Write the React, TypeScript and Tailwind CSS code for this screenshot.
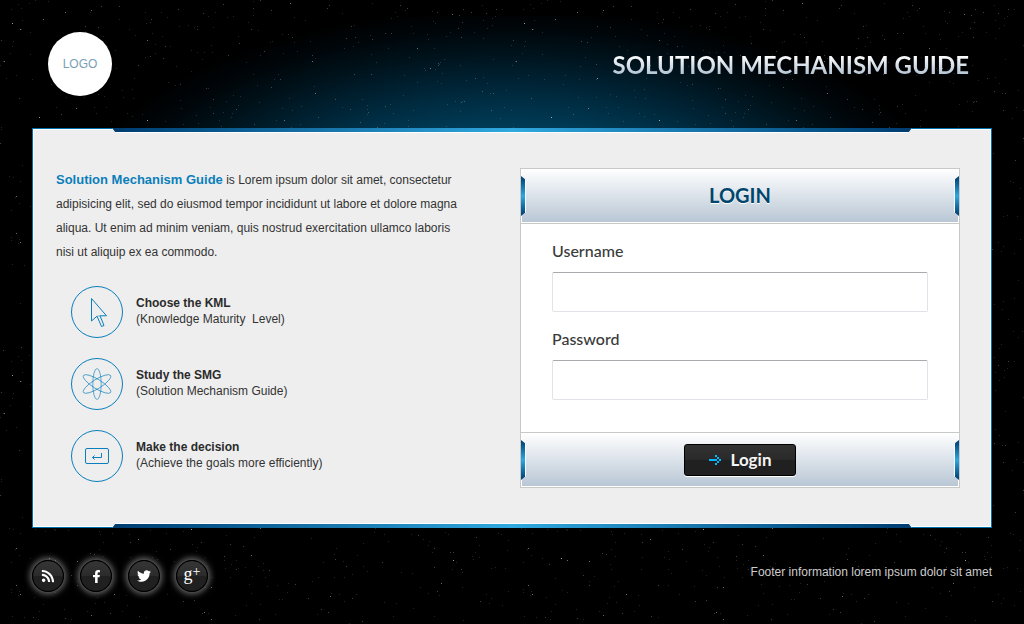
import { useId, type ReactNode } from "react";
import { FaFacebookF, FaRss, FaTwitter } from "react-icons/fa";

const TILE_W = 512;
const TILE_H = 352;

function makeStars(count: number, seed: number): string {
  let s = seed;
  const next = () => {
    s = (s * 1664525 + 1013904223) % 4294967296;
    return s / 4294967296;
  };
  let d = "";
  for (let i = 0; i < count; i++) {
    const x = Math.floor(next() * TILE_W);
    const y = Math.floor(next() * TILE_H);
    d += `M${x} ${y}h1v1h-1z`;
  }
  return d;
}

const starLayers = [
  { d: makeStars(560, 11), opacity: 0.14 },
  { d: makeStars(180, 47), opacity: 0.24 },
  { d: makeStars(42, 91), opacity: 0.42 },
  { d: makeStars(10, 133), opacity: 0.6 },
];

function StarField() {
  return (
    <svg aria-hidden="true" className="absolute inset-0 h-full w-full" shapeRendering="crispEdges">
      <defs>
        <pattern id="stars" width={TILE_W} height={TILE_H} patternUnits="userSpaceOnUse">
          {starLayers.map((layer) => (
            <path key={layer.opacity} d={layer.d} fill="#ffffff" fillOpacity={layer.opacity} />
          ))}
        </pattern>
      </defs>
      <rect width="100%" height="100%" fill="url(#stars)" />
    </svg>
  );
}

function CursorIcon() {
  return (
    <svg viewBox="0 0 52 52" className="size-[52px]" fill="none" stroke="#0a7fbb" aria-hidden="true">
      <circle cx="26" cy="26" r="25.5" />
      <path d="M20.5 12.5v22.5l5.5-4.8 4.5 10.3 2.5-1-4-9.7h6.5z" />
      <path d="M26 30.2l3-.4" strokeOpacity="0.5" />
    </svg>
  );
}

function AtomIcon() {
  return (
    <svg viewBox="0 0 52 52" className="size-[52px]" fill="none" stroke="#0a7fbb" aria-hidden="true">
      <circle cx="26" cy="26" r="25.5" />
      <g strokeWidth="0.8" strokeOpacity="0.8">
        <ellipse cx="26" cy="26" rx="4.2" ry="15.5" />
        <ellipse cx="26" cy="26" rx="4.6" ry="16" transform="rotate(58 26 26)" />
        <ellipse cx="26" cy="26" rx="4.6" ry="16" transform="rotate(-58 26 26)" />
      </g>
    </svg>
  );
}

function EnterIcon() {
  return (
    <svg viewBox="0 0 52 52" className="size-[52px]" fill="none" stroke="#0a7fbb" aria-hidden="true">
      <circle cx="26" cy="26" r="25.5" />
      <rect x="14.5" y="18.5" width="23" height="15" rx="1.5" />
      <path d="M30.5 23v4.5h-9M23.5 25.5l-2 2 2 2" />
    </svg>
  );
}

function ArrowIcon() {
  return (
    <svg viewBox="0 0 6 5" className="h-[10px] w-3" fill="#00b9ff" shapeRendering="crispEdges" aria-hidden="true">
      <path d="M0 2h4v1h-4zM3 0h1v1h-1zM4 1h1v1h-1zM5 2h1v1h-1zM4 3h1v1h-1zM3 4h1v1h-1z" />
    </svg>
  );
}

const features = [
  { icon: <CursorIcon />, title: "Choose the KML", note: "(Knowledge Maturity\u00a0 Level)" },
  { icon: <AtomIcon />, title: "Study the SMG", note: "(Solution Mechanism Guide)" },
  { icon: <EnterIcon />, title: "Make the decision", note: "(Achieve the goals more efficiently)" },
];

const socials = [
  { name: "RSS", icon: <FaRss className="size-[14px]" /> },
  { name: "Facebook", icon: <FaFacebookF className="size-[13px]" /> },
  { name: "Twitter", icon: <FaTwitter className="size-[14px]" /> },
  {
    name: "Google Plus",
    icon: (
      <span className="flex pb-1 font-['Liberation_Serif',serif] text-lg leading-4">
        g<span className="text-sm leading-3">+</span>
      </span>
    ),
  },
];

function PanelEdge({ side }: { side: "top" | "bottom" }) {
  const place =
    side === "top"
      ? "-top-px [clip-path:polygon(0_0,100%_0,calc(100%-4px)_100%,4px_100%)]"
      : "-bottom-px [clip-path:polygon(4px_0,calc(100%-4px)_0,100%_100%,0_100%)]";
  const fill = side === "top" ? "mb-px" : "mt-px";
  return (
    <div className={`absolute inset-x-[79px] flex h-[5px] bg-white ${place}`}>
      <div className={`flex-1 bg-linear-to-r from-[#003c70] via-[#2fa9e0] to-[#003c70] ${fill}`} />
    </div>
  );
}

function SideMarks() {
  const bar = "absolute top-[7px] h-10 w-[5px] bg-white";
  const fill = "h-full w-1 bg-linear-to-b from-[#003c70] via-[#2fa9e0] to-[#003c70]";
  return (
    <>
      <div className={`${bar} left-0 [clip-path:polygon(0_0,100%_4px,100%_calc(100%-4px),0_100%)]`}>
        <div className={fill} />
      </div>
      <div className={`${bar} right-0 [clip-path:polygon(100%_0,0_4px,0_calc(100%-4px),100%_100%)]`}>
        <div className={`${fill} ml-px`} />
      </div>
    </>
  );
}

function Field({ label, type }: { label: ReactNode; type: string }) {
  const id = useId();
  return (
    <div className="flex flex-col gap-[10px]">
      <label htmlFor={id} className="font-['Lato',sans-serif] text-base leading-[22px] font-medium text-[#3a3a3a]">
        {label}
      </label>
      <input
        id={id}
        type={type}
        className="h-10 w-full rounded-xs border border-[#e2e2e8] border-t-[#a9a9ae] bg-white px-3 text-sm text-[#333] outline-none"
      />
    </div>
  );
}

export default function App() {
  return (
    <div className="relative min-h-screen bg-black font-['Liberation_Sans',Arial,sans-serif] text-xs">
      <div className="absolute inset-x-0 top-4 h-28 bg-[radial-gradient(ellipse_450px_220px_at_50%_212px,#003b56_46%,#003148_55%,#002233_67%,#001119_81%,#00060a_91%,#000000_100%)]" />
      <StarField />
      <div className="relative flex min-h-screen flex-col px-8">
        <header className="flex h-32 items-center justify-between pr-[23px] pl-4">
          <a
            href="#"
            className="flex size-16 items-center justify-center rounded-full bg-white text-xs text-[#7a9fb5]"
          >
            LOGO
          </a>
          <h1 className="bg-linear-to-b from-white from-25% to-[#b4c5d5] to-80% bg-clip-text pt-[2px] font-['Lato',sans-serif] text-2xl leading-8 font-bold text-transparent">
            SOLUTION MECHANISM GUIDE
          </h1>
        </header>

        <main className="relative flex gap-10 border border-[#006ea8] bg-[#eeeeee] py-[39px] pr-[31px] pl-[23px] shadow-[inset_0_0_0_1px_#fff]">
          <PanelEdge side="top" />
          <PanelEdge side="bottom" />
          <section className="flex-1">
            <p className="max-w-[412px] text-xs leading-6 text-[#333]">
              <strong className="text-[13px] leading-none text-[#0a7fbb]">Solution Mechanism Guide</strong> is Lorem
              ipsum dolor sit amet, consectetur adipisicing elit, sed do eiusmod tempor incididunt ut labore et dolore
              magna aliqua. Ut enim ad minim veniam, quis nostrud exercitation ullamco laboris nisi ut aliquip ex ea
              commodo.
            </p>
            <ul className="mt-[22px] flex flex-col gap-5 pl-[15px]">
              {features.map((f) => (
                <li key={f.title} className="flex items-center gap-[13px]">
                  {f.icon}
                  <div className="pb-[2px] leading-4 text-[#333]">
                    <h2 className="font-bold text-[#2b2b2b]">{f.title}</h2>
                    <p>{f.note}</p>
                  </div>
                </li>
              ))}
            </ul>
          </section>

          <form className="w-[440px] border border-[#c9c9c9] bg-white" onSubmit={(e) => e.preventDefault()}>
            <div className="relative border-b border-[#c9c9c9]">
              <div className="border border-t-0 border-white bg-linear-to-b from-white to-[#b9c7d5] py-[11px] text-center">
                <h2 className="font-['Lato',sans-serif] text-xl leading-[31px] font-bold text-[#00456c] [text-shadow:0_1px_0_#fff]">
                  LOGIN
                </h2>
              </div>
              <SideMarks />
            </div>
            <div className="flex flex-col gap-4 px-[31px] pt-4 pb-8">
              <Field label="Username" type="text" />
              <Field label="Password" type="password" />
            </div>
            <div className="relative border-t border-[#c9c9c9]">
              <div className="flex justify-center border border-t-0 border-white bg-linear-to-b from-white to-[#b9c7d5] pt-[11px] pb-[10px]">
                <button
                  type="submit"
                  className="flex h-8 w-28 items-center justify-center gap-[10px] rounded-[3px] border border-black bg-linear-to-b from-[#333] from-0% via-[#292929] via-50% to-[#202020] to-50% font-['Lato',sans-serif] text-[17px] leading-6 font-bold text-[#f4f4f4] shadow-[0_1px_0_#fff]"
                >
                  <ArrowIcon />
                  Login
                </button>
              </div>
              <SideMarks />
            </div>
          </form>
        </main>

        <footer className="flex items-start justify-between py-8">
          <nav className="flex gap-4">
            {socials.map((s) => (
              <a
                key={s.name}
                href="#"
                aria-label={s.name}
                className="flex size-8 items-center justify-center rounded-full border border-black bg-linear-to-b from-[#363636] from-0% via-[#2b2b2b] via-50% to-[#202020] to-50% text-white shadow-[0_0_6px_2px_#6b6b6b]"
              >
                {s.icon}
              </a>
            ))}
          </nav>
          <p className="leading-6 text-[#cccccc]">Footer information lorem ipsum dolor sit amet</p>
        </footer>
      </div>
    </div>
  );
}
